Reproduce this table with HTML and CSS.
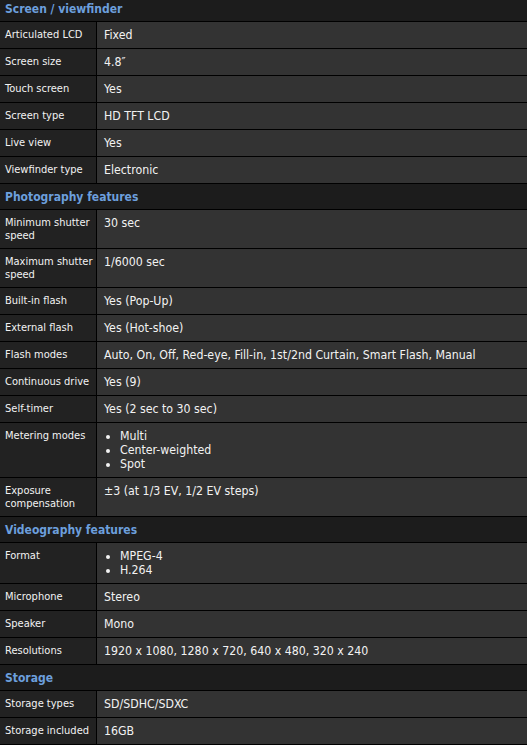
FILE: index.html
```html
<!DOCTYPE html>
<html>
<head>
<meta charset="utf-8">
<link rel="stylesheet" href="styles.css">
</head>
<body>
<table class="specs">
  <tbody>
    <tr class="section first"><th colspan="2">Screen / viewfinder</th></tr>
    <tr><td class="label">Articulated LCD</td><td class="value">Fixed</td></tr>
    <tr><td class="label">Screen size</td><td class="value">4.8″</td></tr>
    <tr><td class="label">Touch screen</td><td class="value">Yes</td></tr>
    <tr><td class="label">Screen type</td><td class="value">HD TFT LCD</td></tr>
    <tr><td class="label">Live view</td><td class="value">Yes</td></tr>
    <tr><td class="label">Viewfinder type</td><td class="value">Electronic</td></tr>

    <tr class="section"><th colspan="2">Photography features</th></tr>
    <tr><td class="label">Minimum shutter speed</td><td class="value">30 sec</td></tr>
    <tr><td class="label">Maximum shutter speed</td><td class="value">1/6000 sec</td></tr>
    <tr><td class="label">Built-in flash</td><td class="value">Yes (Pop-Up)</td></tr>
    <tr><td class="label">External flash</td><td class="value">Yes (Hot-shoe)</td></tr>
    <tr><td class="label">Flash modes</td><td class="value">Auto, On, Off, Red-eye, Fill-in, 1st/2nd Curtain, Smart Flash, Manual</td></tr>
    <tr><td class="label">Continuous drive</td><td class="value">Yes (9)</td></tr>
    <tr><td class="label">Self-timer</td><td class="value">Yes (2 sec to 30 sec)</td></tr>
    <tr><td class="label">Metering modes</td><td class="value"><ul class="list"><li>Multi</li><li>Center-weighted</li><li>Spot</li></ul></td></tr>
    <tr><td class="label">Exposure compensation</td><td class="value">±3 (at 1/3 EV, 1/2 EV steps)</td></tr>

    <tr class="section"><th colspan="2">Videography features</th></tr>
    <tr><td class="label">Format</td><td class="value"><ul class="list"><li>MPEG-4</li><li>H.264</li></ul></td></tr>
    <tr><td class="label">Microphone</td><td class="value">Stereo</td></tr>
    <tr><td class="label">Speaker</td><td class="value">Mono</td></tr>
    <tr><td class="label">Resolutions</td><td class="value">1920 x 1080, 1280 x 720, 640 x 480, 320 x 240</td></tr>

    <tr class="section"><th colspan="2">Storage</th></tr>
    <tr><td class="label">Storage types</td><td class="value">SD/SDHC/SDXC</td></tr>
    <tr><td class="label">Storage included</td><td class="value">16GB</td></tr>
  </tbody>
</table>
</body>
</html>
```

FILE: styles.css
```css
html, body {
  margin: 0;
  padding: 0;
  background: #1c1c1c;
}
.specs {
  width: 527px;
  border-collapse: collapse;
  font-family: "DejaVu Sans Condensed", "DejaVu Sans", sans-serif;
  color: #f2f2f2;
}
.specs th, .specs td {
  border: 1px solid #000;
  vertical-align: top;
  text-align: left;
}
.specs tr:first-child th {
  border-top: none;
}
.specs th, .specs td:first-child { border-left: none; }
.specs th, .specs td:last-child { border-right: none; }
.section th {
  background: #1c1c1c;
  color: #6c9fdc;
  font-size: 12px;
  font-weight: bold;
  line-height: 14px;
  padding: 6px 5px 5px;
  height: 14px;
}
.section.first th {
  padding-top: 2px;
}
.label {
  width: 89px;
  background: #222;
  font-size: 11px;
  line-height: 13px;
  padding: 6px 2px 6px 5px;
}
.value {
  background: #333;
  font-size: 12.25px;
  line-height: 14px;
  padding: 6px 6px 6px 7px;
}
.list {
  margin: 0;
  padding-left: 16px;
  line-height: 14px;
}
```
